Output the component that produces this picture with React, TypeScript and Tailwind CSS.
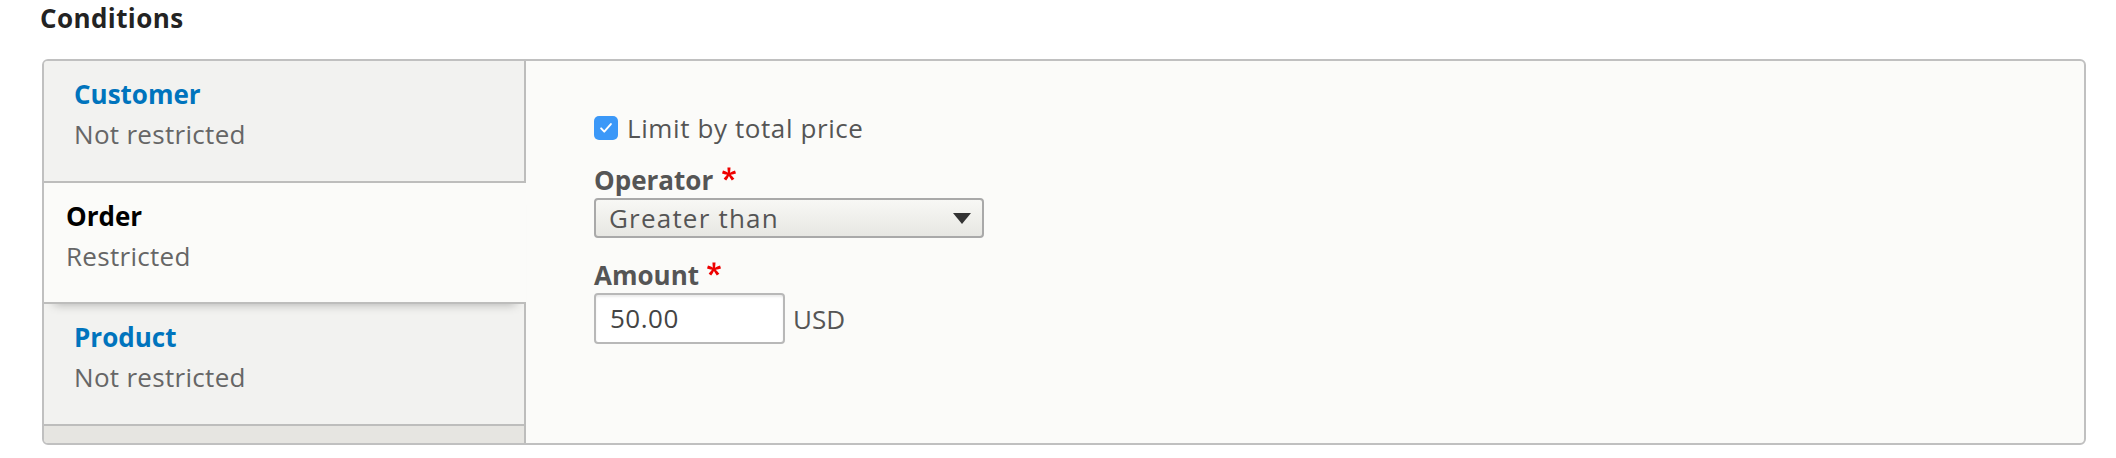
import clsx from 'clsx';

type Tab = {
    title: string;
    summary: string;
    selected: boolean;
    height: string;
};

const tabs: Tab[] = [
    { title: 'Customer', summary: 'Not restricted', selected: false, height: 'h-[122px]' },
    { title: 'Order', summary: 'Restricted', selected: true, height: 'h-[121px]' },
    { title: 'Product', summary: 'Not restricted', selected: false, height: 'h-[122px]' },
];

function RequiredMark({ className }: { className?: string }) {
    return (
        <svg viewBox="0 0 16 16" className={className} aria-hidden="true">
            <path
                fill="#e00"
                d="M0,7.562l1.114-3.438c2.565,0.906,4.43,1.688,5.59,2.35C6.398,3.553,6.237,1.544,6.22,0.447h3.511c-0.05,1.597-0.234,3.6-0.558,6.003c1.664-0.838,3.566-1.613,5.714-2.325L16,7.562c-2.05,0.678-4.06,1.131-6.028,1.356c0.984,0.856,2.372,2.381,4.166,4.575l-2.906,2.059c-0.935-1.274-2.041-3.009-3.316-5.206c-1.194,2.275-2.244,4.013-3.147,5.206l-2.856-2.059c1.872-2.307,3.211-3.832,4.017-4.575C3.849,8.516,1.872,8.062,0,7.562"
            />
        </svg>
    );
}

export default function App() {
    return (
        <div className="min-h-screen bg-white pl-[40px] pr-[30px] font-['Open_Sans',sans-serif]">
            <h2 className="text-[26px] leading-[36px] font-bold tracking-[0.4px] text-[#232323]">Conditions</h2>

            <div className="ml-[2px] mt-[23px] flex h-[386px] overflow-hidden rounded-[6px] border-2 border-[#c0c0c0] bg-[#fbfbf9]">
                {/* Vertical tab menu */}
                <ul className="flex w-[482px] shrink-0 flex-col bg-[#e6e5e1]">
                    {tabs.map((tab) => (
                        <li
                            key={tab.title}
                            className={clsx(
                                'border-b-2 border-[#bdbdbc] pt-[13px]',
                                tab.height,
                                tab.selected
                                    ? 'relative z-10 bg-[#fbfbf9] pl-[22px] shadow-[0_10px_10px_-10px_rgba(0,0,0,0.3)]'
                                    : 'border-r-2 bg-[#f2f2f0] pl-[30px]'
                            )}
                        >
                            <div
                                className={clsx(
                                    'text-[26px] leading-[40px] font-bold',
                                    tab.selected ? 'text-black' : 'text-[#0074bd]'
                                )}
                            >
                                {tab.title}
                            </div>
                            <div className="text-[26px] leading-[40px] tracking-[0.3px] text-[#666]">{tab.summary}</div>
                        </li>
                    ))}
                    <li className="flex-1 border-r-2 border-[#bdbdbc]" />
                </ul>

                {/* Pane */}
                <div className="flex-1 pl-[68px] pt-[47px] text-[#555]">
                    <label className="flex h-[40px] items-center gap-[9px]">
                        <span className="flex h-[24px] w-[24px] items-center justify-center rounded-[5px] bg-[#3b98f8]">
                            <svg viewBox="0 0 24 24" className="h-[18px] w-[18px]" fill="none">
                                <path d="M5.5 12.5l4.2 4.3 8.8-10" stroke="white" strokeWidth="2.6" strokeLinecap="round" strokeLinejoin="round" />
                            </svg>
                        </span>
                        <span className="text-[26px] leading-[40px] tracking-[0.6px]">Limit by total price</span>
                    </label>

                    <div className="mt-[14px] flex items-start text-[26px] leading-[36px] font-bold">
                        <span>Operator</span>
                        <RequiredMark className="ml-[9px] mt-[5px] h-[14px] w-[14px]" />
                    </div>
                    <div className="flex h-[40px] w-[390px] items-center justify-between rounded-[4px] border-2 border-[#a9a9a9] bg-linear-to-b from-[#f8f8f5] to-[#e7e7e3] pl-[13px] pr-[11px]">
                        <span className="text-[26px] leading-[35px] tracking-[1.2px] text-[#555]">Greater than</span>
                        <svg viewBox="0 0 18 11" className="h-[11px] w-[18px]">
                            <path d="M0 0h18L9 11z" fill="#333" />
                        </svg>
                    </div>

                    <div className="mt-[19px] flex items-start text-[26px] leading-[36px] font-bold">
                        <span>Amount</span>
                        <RequiredMark className="ml-[8px] mt-[5px] h-[14px] w-[14px]" />
                    </div>
                    <div className="flex items-center gap-[8px]">
                        <div className="h-[51px] w-[191px] rounded-[4px] border-2 border-[#b8b8b8] bg-white pl-[14px] shadow-[inset_0_2px_2px_rgba(0,0,0,0.08)]">
                            <span className="text-[26px] leading-[47px] tracking-[0.5px] text-[#444]">50.00</span>
                        </div>
                        <span className="text-[26px] leading-[40px] text-[#555]">USD</span>
                    </div>
                </div>
            </div>
        </div>
    );
}
